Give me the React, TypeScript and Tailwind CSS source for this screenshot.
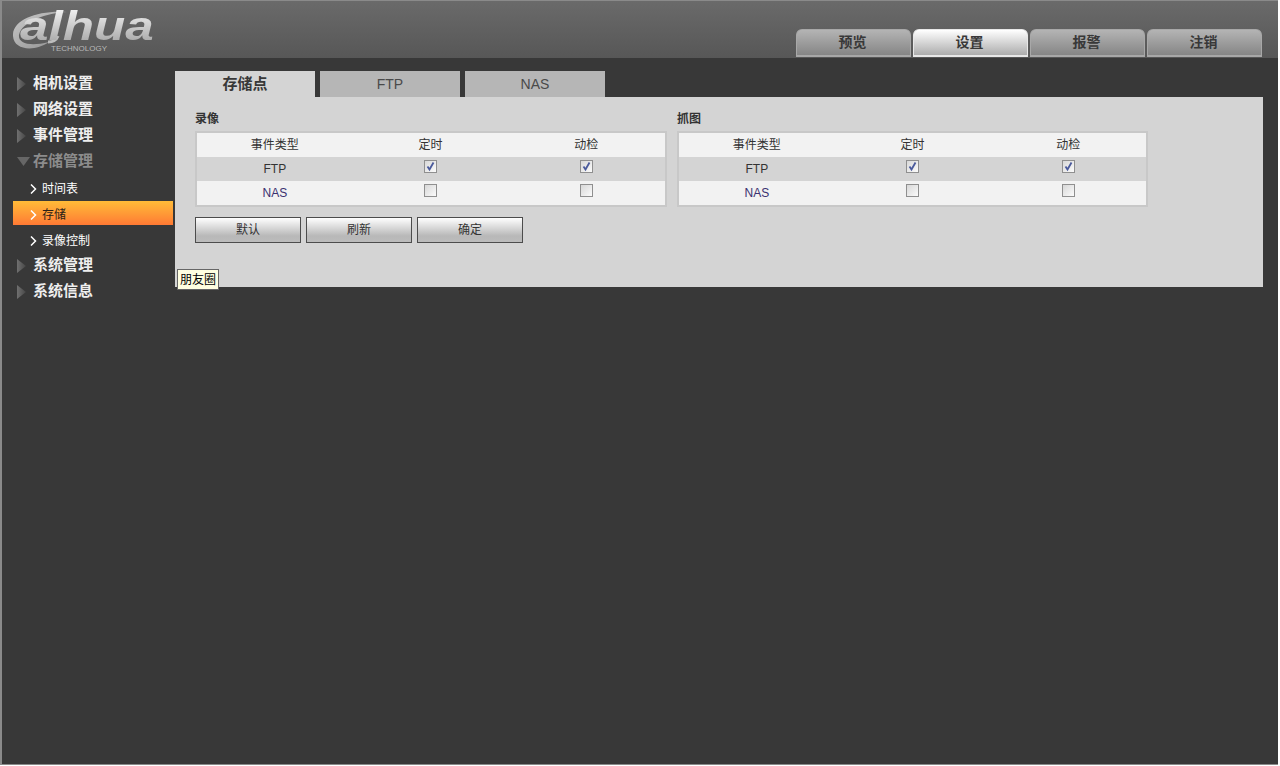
import { useId } from "react";

const FONT = "font-['Liberation_Sans','Noto_Sans_CJK_SC',sans-serif]";

const topTabs = [
  { label: "预览", active: false },
  { label: "设置", active: true },
  { label: "报警", active: false },
  { label: "注销", active: false },
];

const Triangle = ({ down = false }: { down?: boolean }) => {
  const id = useId();
  return down ? (
    <svg width="13" height="10" viewBox="0 0 13 10" className="shrink-0 mr-[3px] ml-[15px]">
      <polygon points="0,0 13,0 6.5,9" fill="#666666" />
    </svg>
  ) : (
    <svg width="10" height="14" viewBox="0 0 10 14" className="shrink-0 mr-[6px] ml-[15px]">
      <defs>
        <linearGradient id={id} x1="0" x2="1" y1="0" y2="0">
          <stop offset="0" stopColor="#707070" />
          <stop offset="1" stopColor="#464646" />
        </linearGradient>
      </defs>
      <polygon points="0,0 9,7 0,14" fill={`url(#${id})`} />
    </svg>
  );
};

const Chevron = () => (
  <svg width="7" height="10" viewBox="0 0 7 10" className="shrink-0 ml-[28px] mr-[5px]">
    <polyline points="1,0.5 5.5,5 1,9.5" fill="none" stroke="#ffffff" strokeWidth="1.5" />
  </svg>
);

const MenuHead = ({ label, open = false }: { label: string; open?: boolean }) => (
  <div className={`h-[26px] pt-[1px] flex items-center text-[15px] font-bold ${open ? "text-[#8c8c8c]" : "text-[#eeeeee]"}`}>
    <Triangle down={open} />
    <span>{label}</span>
  </div>
);

const MenuChild = ({ label, active = false }: { label: string; active?: boolean }) => (
  <div
    className={`h-[24px] pt-[3px] flex items-center text-[12px] text-white ${
      active ? "bg-gradient-to-b from-[#ffbb38] to-[#ff7934] ml-[11px] w-[160px] [&>svg]:ml-[17px]" : ""
    }`}
  >
    <Chevron />
    <span className={active ? "text-[#2a2018]" : ""}>{label}</span>
  </div>
);

const Checkbox = ({ checked = false }: { checked?: boolean }) => (
  <span className="relative block w-[13px] h-[13px] border border-[#8f8f8f] bg-gradient-to-br from-[#d8d8d8] to-[#fbfbfb] mt-[3px]">
    {checked && (
      <svg width="11" height="11" viewBox="0 0 11 11" className="absolute left-0 top-0">
        <path d="M2.5 5.5 L4.5 8.5 L8.5 1.5" fill="none" stroke="#4a5a9c" strokeWidth="1.8" />
      </svg>
    )}
  </span>
);

const EventTable = ({ title, width, rowPad }: { title: string; width: string; rowPad: string }) => {
  const rows = [
    { name: "FTP", bg: "bg-[#d4d4d4]", nameColor: "text-[#333333]", on: true },
    { name: "NAS", bg: "bg-[#f2f2f2]", nameColor: "text-[#3b3170]", on: false },
  ];
  return (
    <div className={width}>
      <div className="h-[34px] pt-[14px] text-[12px] leading-[16px] font-bold text-[#333333]">{title}</div>
      <div className="border-2 border-[#c8c8c8] text-[12px] text-[#333333]">
        <div className={`grid grid-cols-3 h-[24px] items-center text-center bg-[#f2f2f2] ${rowPad}`}>
          <span>事件类型</span>
          <span>定时</span>
          <span>动检</span>
        </div>
        {rows.map((row) => (
          <div key={row.name} className={`grid grid-cols-3 h-[24px] text-center items-center ${rowPad} ${row.bg}`}>
            <span className={`pb-[1px] ${row.nameColor}`}>{row.name}</span>
            <span className="flex justify-center self-start">
              <Checkbox checked={row.on} />
            </span>
            <span className="flex justify-center self-start">
              <Checkbox checked={row.on} />
            </span>
          </div>
        ))}
      </div>
    </div>
  );
};

const ActionButton = ({ label }: { label: string }) => (
  <button className="w-[106px] h-[26px] border border-[#4c4c4c] text-[12px] text-[#333333] bg-gradient-to-b from-[#ffffff] via-[#b8b8b8] via-[75%] to-[#bcbcbc]">
    {label}
  </button>
);

const Logo = () => (
  <div className="relative w-[150px] h-[46px] mt-[8px] ml-[11px]">
    <svg width="70" height="46" viewBox="0 0 70 46" className="absolute left-0 top-0">
      <defs>
        <linearGradient id="swoosh" x1="0" x2="1" y1="0" y2="1">
          <stop offset="0" stopColor="#cccccc" />
          <stop offset="1" stopColor="#8c8c8c" />
        </linearGradient>
      </defs>
      <path
        d="M0 25 C1 10 26 1 54 3 C34 4 9 12 6 26 C5 34 16 38 36 33 C22 43 -1 42 0 25 Z"
        fill="url(#swoosh)"
      />
      <path d="M45 27 C43 32 40 33 35 33" fill="none" stroke="#bdbdbd" strokeWidth="3" />
    </svg>
    <span className="absolute left-[7px] top-0 origin-left scale-x-[1.28] pr-1 text-[40px] leading-[34px] font-bold italic whitespace-nowrap font-['Liberation_Sans',sans-serif] bg-gradient-to-b from-[#f2f2f2] to-[#a8a8a8] bg-clip-text text-transparent">
      alhua
    </span>
    <span className="absolute left-[38px] top-[35px] text-[8px] leading-[10px] text-[#b8b8b8] font-['Liberation_Sans',sans-serif]">
      TECHNOLOGY
    </span>
  </div>
);

export default function App() {
  return (
    <div className={`${FONT} w-[1278px] h-[765px] flex flex-col bg-[#383838] border-l-2 border-b border-[#8a8a8a]`}>
      {/* header */}
      <div className="h-[58px] shrink-0 flex justify-between border-t border-[#8a8a8a] bg-gradient-to-b from-[#6a6a6a] to-[#575757]">
        <Logo />
        <div className="flex items-end gap-[2px] pr-[16px] pb-[1px]">
          {topTabs.map((tab) => (
            <div
              key={tab.label}
              className={`w-[115px] h-[28px] pr-[2px] flex items-center justify-center rounded-t-[6px] text-[14px] font-bold text-[#383838] border border-b-2 ${
                tab.active
                  ? "bg-gradient-to-b from-[#ffffff] to-[#adadad] border-[#e8e8e8]"
                  : "bg-gradient-to-b from-[#b4b4b4] to-[#868686] border-[#a8a8a8]"
              }`}
            >
              {tab.label}
            </div>
          ))}
        </div>
      </div>

      <div className="flex flex-1 items-start">
        {/* sidebar */}
        <div className="w-[173px] shrink-0 pt-[12px]">
          <MenuHead label="相机设置" />
          <MenuHead label="网络设置" />
          <MenuHead label="事件管理" />
          <MenuHead label="存储管理" open />
          <div className="flex flex-col gap-[2px] my-[1px]">
            <MenuChild label="时间表" />
            <MenuChild label="存储" active />
            <MenuChild label="录像控制" />
          </div>
          <MenuHead label="系统管理" />
          <MenuHead label="系统信息" />
        </div>

        {/* content */}
        <div className="relative w-[1088px] mt-[13px]">
          <div className="flex gap-[5px] h-[26px]">
            <div className="w-[140px] flex items-center justify-center bg-[#d4d4d4] text-[15px] font-bold text-[#383838]">存储点</div>
            <div className="w-[140px] flex items-center justify-center bg-[#b6b6b6] text-[14px] text-[#4a4a4a]">FTP</div>
            <div className="w-[140px] flex items-center justify-center bg-[#b6b6b6] text-[14px] text-[#4a4a4a]">NAS</div>
          </div>
          <div className="h-[190px] bg-[#d4d4d4] px-[20px]">
            <div className="flex gap-[10px]">
              <EventTable title="录像" width="w-[472px]" rowPad="pr-[1px]" />
              <EventTable title="抓图" width="w-[471px]" rowPad="pr-0" />
            </div>
            <div className="flex gap-[5px] mt-[10px]">
              <ActionButton label="默认" />
              <ActionButton label="刷新" />
              <ActionButton label="确定" />
            </div>
          </div>
          <div className="absolute left-[2px] top-[198px] w-[42px] h-[21px] flex items-center justify-center border border-[#666666] bg-[#ffffe1] text-[12px] text-black">
            朋友圈
          </div>
        </div>
      </div>
    </div>
  );
}
